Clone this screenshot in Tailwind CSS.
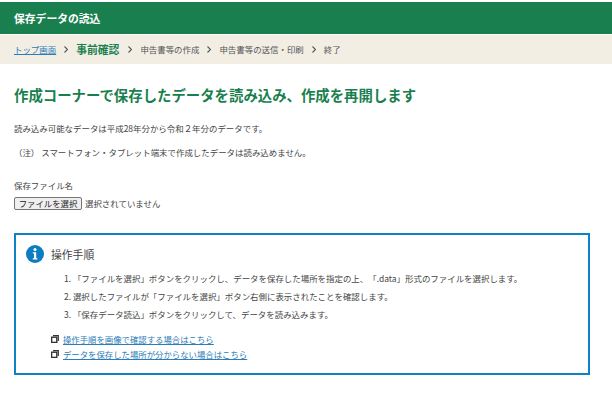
<!DOCTYPE html>
<html lang="ja">
<head>
  <meta charset="UTF-8" />
  <title>保存データの読込</title>
  <script src="https://cdn.jsdelivr.net/npm/@tailwindcss/browser@4"></script>
</head>
<body class="bg-white font-['Noto_Sans_CJK_JP','Noto_Sans',sans-serif] text-[8.45px] text-[#444] [text-spacing-trim:space-all] w-[612px] h-[401px] overflow-hidden">
  <!-- Header -->
  <div class="mt-[2px] h-[32px] bg-[#1a7f4e] flex items-center px-[14px] text-[10.8px] font-bold text-white">保存データの読込</div>

  <!-- Steps -->
  <nav class="mt-[1px] h-[29px] bg-[#f2eee4] flex items-center pl-[14px] text-[#555]">
    <a href="#" class="text-[#2b7cb8] underline">トップ画面</a>
    <svg class="mx-[8px] w-[4px] h-[7px]" viewBox="0 0 4 7" fill="none" stroke="#555" stroke-width="1.1"><path d="M0.5 0.5l3 3-3 3" /></svg>
    <span class="text-[10.8px] font-bold text-[#1a7f4e]">事前確認</span>
    <svg class="mx-[8.5px] w-[4px] h-[7px]" viewBox="0 0 4 7" fill="none" stroke="#555" stroke-width="1.1"><path d="M0.5 0.5l3 3-3 3" /></svg>
    <span>申告書等の作成</span>
    <svg class="mx-[8px] w-[4px] h-[7px]" viewBox="0 0 4 7" fill="none" stroke="#555" stroke-width="1.1"><path d="M0.5 0.5l3 3-3 3" /></svg>
    <span>申告書等の送信・印刷</span>
    <svg class="mx-[8px] w-[4px] h-[7px]" viewBox="0 0 4 7" fill="none" stroke="#555" stroke-width="1.1"><path d="M0.5 0.5l3 3-3 3" /></svg>
    <span>終了</span>
  </nav>

  <main class="px-[14px]">
    <h1 class="mt-[21px] text-[14.4px] leading-[20px] font-bold text-[#1a7f4e]">作成コーナーで保存したデータを読み込み、作成を再開します</h1>

    <p class="mt-[17px] leading-[12px]">読み込み可能なデータは平成28年分から令和２年分のデータです。</p>
    <p class="mt-[11.5px] leading-[12px]">（注） スマートフォン・タブレット端末で作成したデータは読み込めません。</p>

    <p class="mt-[21.5px] leading-[12px]">保存ファイル名</p>
    <div class="mt-[5.5px] flex items-center gap-[3px]">
      <button class="h-[13px] w-[68px] bg-[#efefef] border border-[#767676] rounded-[2px] text-[8.4px] leading-none text-[#222]">ファイルを選択</button>
      <span>選択されていません</span>
    </div>

    <!-- Procedure box -->
    <section class="mt-[23.5px] w-[576px] h-[142px] border-2 border-[#0d83c6] pl-[10px] pt-[10px]">
      <div class="flex items-center gap-[7px]">
        <svg class="w-[18px] h-[18px]" viewBox="0 0 18 18">
          <circle cx="9" cy="9" r="9" fill="#0d7cc0" />
          <circle cx="9" cy="4.6" r="1.5" fill="#fff" />
          <path d="M6.8 7.2h3.4v6h1.2v1.4H6.8v-1.4H8V8.6H6.8z" fill="#fff" />
        </svg>
        <h2 class="text-[10.8px] leading-[18px]">操作手順</h2>
      </div>
      <ol class="mt-[9px] pl-[38px] leading-[12px] flex flex-col gap-[6px]">
        <li>1. 「ファイルを選択」ボタンをクリックし、データを保存した場所を指定の上、「.data」形式のファイルを選択します。</li>
        <li>2. 選択したファイルが「ファイルを選択」ボタン右側に表示されたことを確認します。</li>
        <li>3. 「保存データ読込」ボタンをクリックして、データを読み込みます。</li>
      </ol>
      <ul class="mt-[13px] pl-[25px] leading-[12px] text-[8.4px] flex flex-col gap-[3px]">
        <li class="flex items-center gap-[4px]">
          <svg class="w-[8px] h-[8px]" viewBox="0 0 8 8" fill="none" stroke="#333"><rect x="0.6" y="2.2" width="5.2" height="5.2" stroke-width="1.4" /><path d="M2 0.7h5.3V6" stroke-width="1.2" /></svg>
          <a href="#" class="text-[#2b7cb8] underline">操作手順を画像で確認する場合はこちら</a>
        </li>
        <li class="flex items-center gap-[4px]">
          <svg class="w-[8px] h-[8px]" viewBox="0 0 8 8" fill="none" stroke="#333"><rect x="0.6" y="2.2" width="5.2" height="5.2" stroke-width="1.4" /><path d="M2 0.7h5.3V6" stroke-width="1.2" /></svg>
          <a href="#" class="text-[#2b7cb8] underline">データを保存した場所が分からない場合はこちら</a>
        </li>
      </ul>
    </section>
  </main>
</body>
</html>
